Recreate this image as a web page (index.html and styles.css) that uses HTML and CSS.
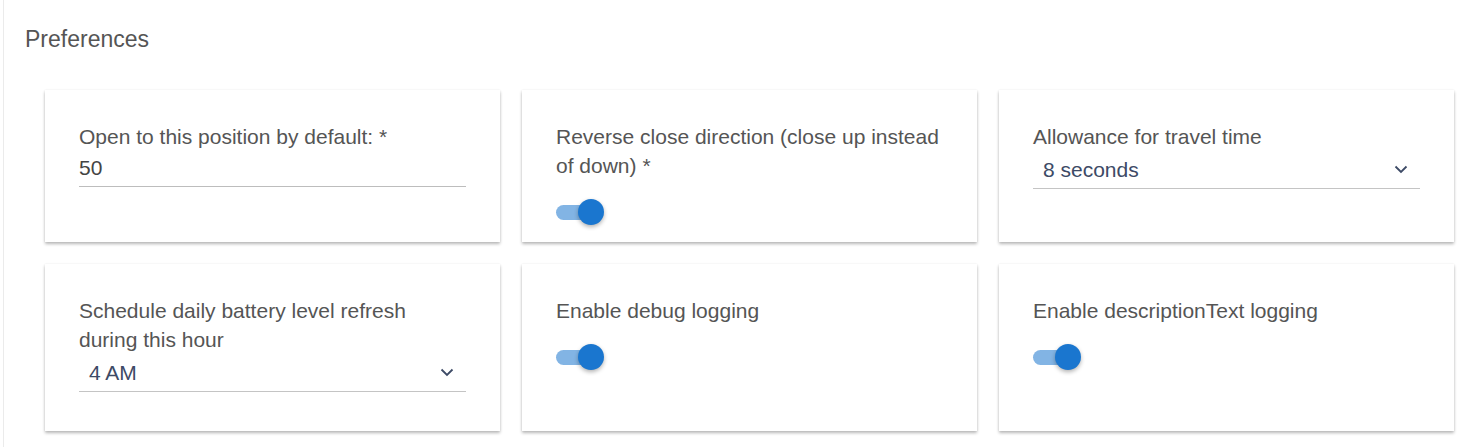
FILE: index.html
```html
<!DOCTYPE html>
<html lang="en">
<head>
  <meta charset="UTF-8" />
  <title>Preferences</title>
  <meta name="viewport" content="width=device-width, initial-scale=1.0"/>
  <link rel="stylesheet" href="styles.css">
</head>
<body>

  <div class="panel">
    <h2 class="panel-title">Preferences</h2>

    <div class="prefs-grid">

      <div class="pref-card">
        <label class="pref-label">Open to this position by default: *</label>
        <div class="text-field">50</div>
      </div>

      <div class="pref-card">
        <label class="pref-label">Reverse close direction (close up instead of down) *</label>
        <div class="switch on"><span class="switch-track"></span><span class="switch-knob"></span></div>
      </div>

      <div class="pref-card">
        <label class="pref-label">Allowance for travel time</label>
        <div class="select-field">
          <span class="select-value">8 seconds</span>
          <svg class="chevron" width="14" height="9" viewBox="0 0 14 9"><path d="M1.5 1.5 L7 7 L12.5 1.5" fill="none" stroke="#3d4a66" stroke-width="1.8"/></svg>
        </div>
      </div>

      <div class="pref-card">
        <label class="pref-label">Schedule daily battery level refresh during this hour</label>
        <div class="select-field">
          <span class="select-value">4 AM</span>
          <svg class="chevron" width="14" height="9" viewBox="0 0 14 9"><path d="M1.5 1.5 L7 7 L12.5 1.5" fill="none" stroke="#3d4a66" stroke-width="1.8"/></svg>
        </div>
      </div>

      <div class="pref-card">
        <label class="pref-label">Enable debug logging</label>
        <div class="switch on"><span class="switch-track"></span><span class="switch-knob"></span></div>
      </div>

      <div class="pref-card">
        <label class="pref-label">Enable descriptionText logging</label>
        <div class="switch on"><span class="switch-track"></span><span class="switch-knob"></span></div>
      </div>

    </div>
  </div>

</body>
</html>
```

FILE: styles.css
```css
/* RESET */
* {
  margin: 0;
  padding: 0;
  box-sizing: border-box;
}

body {
  background: #fff;
  font-family: "Liberation Sans", Arial, sans-serif;
  color: #555;
}

.panel {
  margin-left: 3px;
  border-left: 1px solid #ebebeb;
  min-height: 447px;
  padding: 26px 0 0 21px;
}

.panel-title {
  font-size: 23px;
  font-weight: 400;
  line-height: 26px;
  color: #555;
}

.prefs-grid {
  display: grid;
  grid-template-columns: repeat(3, 455px);
  column-gap: 22px;
  row-gap: 22px;
  margin: 38px 0 0 20px;
}

.pref-card {
  background: #fff;
  padding: 32px 34px 17px;
  box-shadow: 0 2px 3px rgba(0, 0, 0, 0.28), 0 0 2px rgba(0, 0, 0, 0.06);
  display: flex;
  flex-direction: column;
}

.pref-label {
  display: block;
  font-size: 21px;
  line-height: 29px;
  color: #555;
}

/* campo de texto */
.text-field {
  height: 36px;
  line-height: 34px;
  font-size: 21px;
  color: #444;
  border-bottom: 1px solid #bdbdbd;
  margin-bottom: 22px;
}

/* select */
.select-field {
  height: 38px;
  display: flex;
  align-items: center;
  justify-content: space-between;
  padding: 0 12px 0 10px;
  border-bottom: 1px solid #c4c4c4;
  margin-bottom: 22px;
}

.select-value {
  font-size: 21px;
  color: #3d4a66;
}

.chevron {
  display: block;
}

/* switch */
.switch {
  position: relative;
  width: 48px;
  height: 26px;
  margin-top: 19px;
}

.switch-track {
  position: absolute;
  left: 0;
  top: 6px;
  width: 44px;
  height: 15px;
  border-radius: 8px;
  background: #82b4e4;
}

.switch-knob {
  position: absolute;
  left: 22px;
  top: 0;
  width: 26px;
  height: 26px;
  border-radius: 50%;
  background: #1a76cf;
  box-shadow: 0 2px 4px rgba(0, 0, 0, 0.3);
}
```
